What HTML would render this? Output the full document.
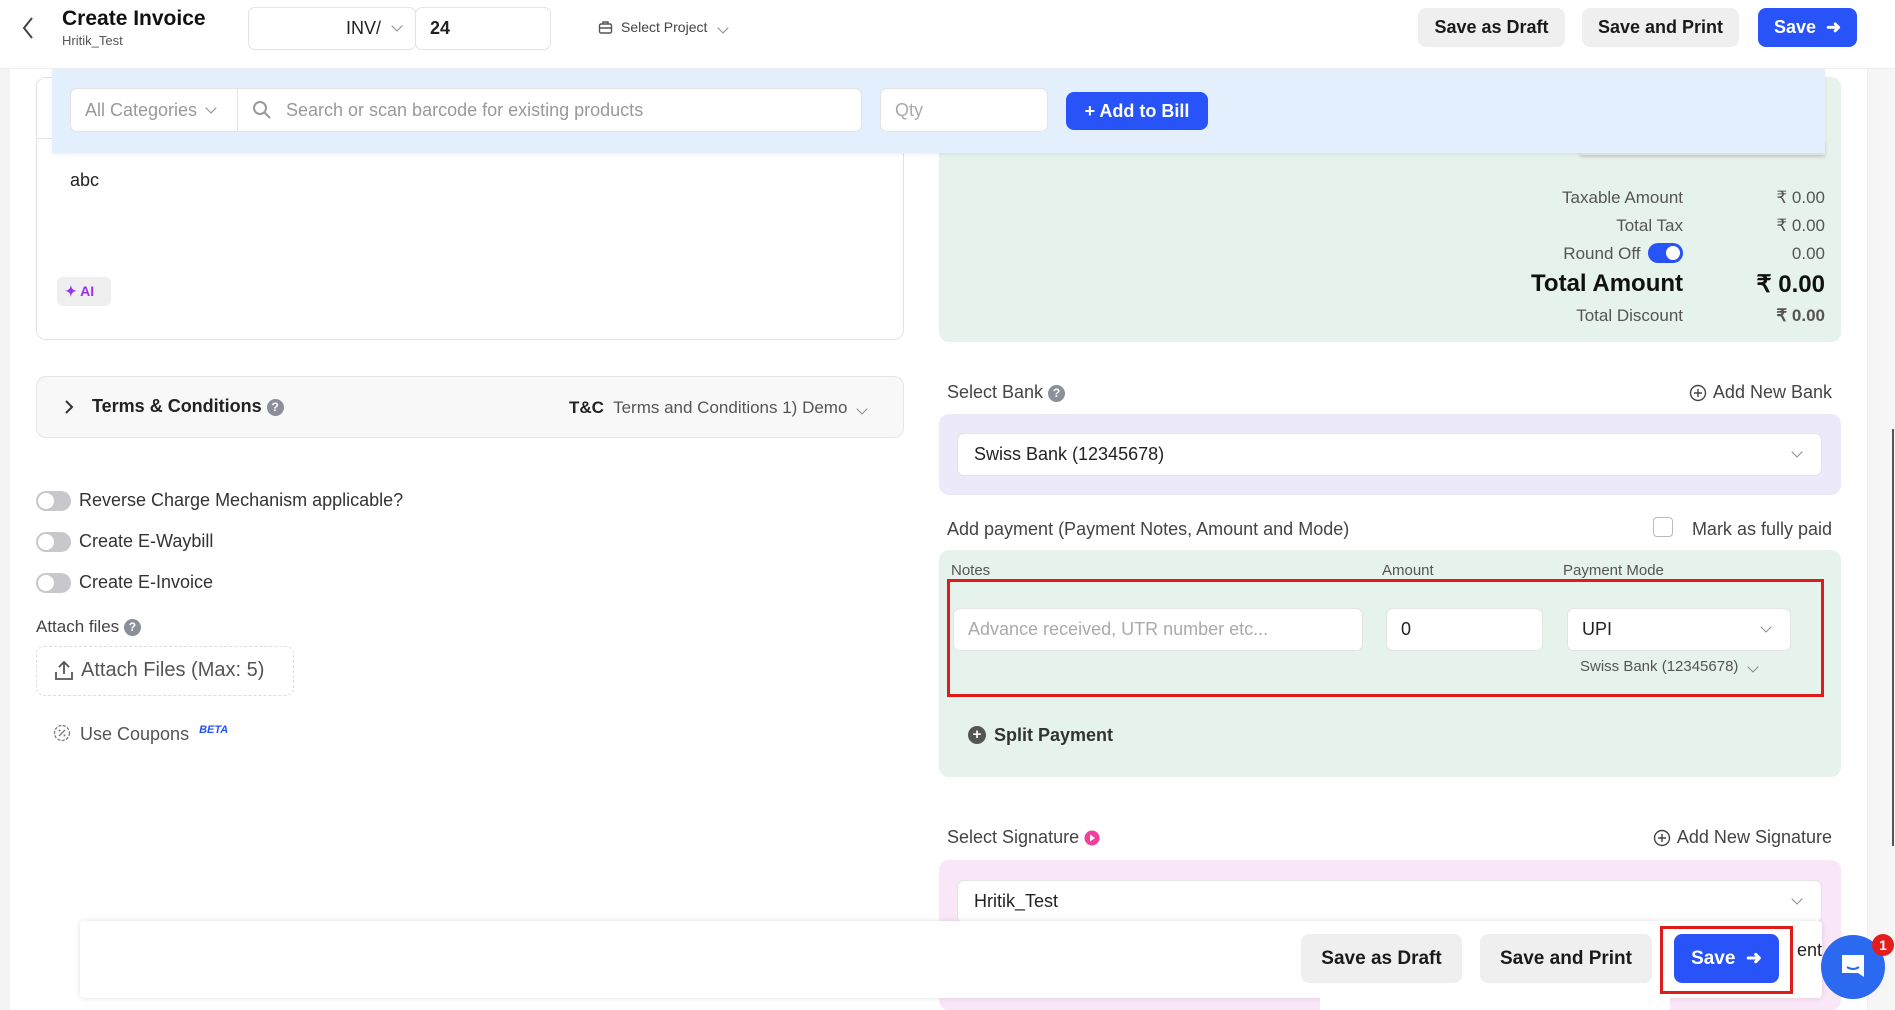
<!DOCTYPE html>
<html><head><meta charset="utf-8"><style>
*{box-sizing:border-box;margin:0;padding:0}
body{width:1895px;height:1010px;overflow:hidden;background:#fff;font-family:"Liberation Sans",sans-serif;color:#222;position:relative}
.a{position:absolute}
.btn{position:absolute;border-radius:8px;background:#efefef;font-weight:bold;font-size:18px;color:#1a1a1a;display:flex;align-items:center;justify-content:center}
.blue{background:#2753f8;color:#fff}
.inp{position:absolute;background:#fff;border:1px solid #e3e3e3;border-radius:7px;display:flex;align-items:center;font-size:18px}
.chev{display:inline-block;width:8px;height:8px;border-right:1.5px solid #888;border-bottom:1.5px solid #888;transform:rotate(45deg)}
.q{display:inline-block;width:17px;height:17px;border-radius:50%;background:#8a8f99;color:#fff;font-size:12px;text-align:center;line-height:17px;font-weight:bold;vertical-align:middle}
.tg{position:absolute;width:35px;height:20px;border-radius:10px;background:#c8c8cc;left:36px}
.tg:after{content:"";position:absolute;left:2px;top:2px;width:16px;height:16px;border-radius:50%;background:#fff}
.lbl{position:absolute;font-size:18px;color:#333}
.r{position:absolute;font-size:18px;color:#444;text-align:right;display:flex;align-items:center;gap:6px}
</style></head><body>
<div class="a" style="left:0;top:69px;width:10px;height:941px;background:#f3f3f3"></div>
<div class="a" style="right:0;top:69px;width:28px;height:941px;background:#f6f6f6;border-left:1px solid #eee"></div>
<div class="a" style="right:1px;top:429px;width:2px;height:417px;background:#555"></div>
<!-- header -->
<div class="a" style="left:0;top:0;width:1895px;height:69px;border-bottom:1px solid #eee;background:#fff"></div>
<svg class="a" style="left:20px;top:16px" width="16" height="24"><path d="M12 2 L4 12 L12 22" stroke="#444" stroke-width="2" fill="none"/></svg>
<div class="a" style="left:62px;top:7px;font-size:21px;font-weight:bold;color:#111">Create Invoice</div>
<div class="a" style="left:62px;top:33px;font-size:13px;color:#555">Hritik_Test</div>
<div class="inp" style="left:248px;top:7px;width:168px;height:43px;justify-content:flex-end;padding-right:14px;font-size:18px">INV/ <span class="chev" style="margin-left:12px;margin-top:-5px"></span></div>
<div class="inp" style="left:415px;top:7px;width:136px;height:43px;padding-left:14px;font-weight:bold">24</div>
<svg class="a" style="left:598px;top:20px" width="15" height="15"><rect x="1.5" y="4" width="12" height="9" rx="1.5" stroke="#555" stroke-width="1.4" fill="none"/><path d="M5 4V2h5v2M1.5 8h12" stroke="#555" stroke-width="1.4" fill="none"/></svg>
<div class="a" style="left:621px;top:19px;font-size:14px;color:#444">Select Project <span class="chev" style="margin-left:8px;margin-top:-4px"></span></div>
<div class="btn" style="left:1418px;top:8px;width:147px;height:39px">Save as Draft</div>
<div class="btn" style="left:1582px;top:8px;width:157px;height:39px">Save and Print</div>
<div class="btn blue" style="left:1758px;top:8px;width:99px;height:39px">Save &nbsp;&#10140;</div>
<!-- left card -->
<div class="a" style="left:36px;top:77px;width:868px;height:263px;border:1px solid #e3e3e3;border-radius:10px"></div>
<div class="a" style="left:37px;top:138px;width:866px;height:1px;background:#e6e6e6"></div>
<div class="a" style="left:70px;top:170px;font-size:18px">abc</div>
<div class="a" style="left:57px;top:277px;width:54px;height:29px;border-radius:6px;background:#efefef;color:#9b30f0;font-size:14px;font-weight:bold;line-height:29px;padding-left:8px">&#10022; AI</div>
<!-- right totals -->
<div class="a" style="left:939px;top:77px;width:902px;height:265px;background:#e6f2ec;border-radius:10px"></div>
<div class="a" style="left:1580px;top:140px;width:245px;height:15px;background:#e2ece7;box-shadow:0 2px 3px #ccc"></div>
<div class="a" style="left:1400px;top:184px;width:283px;text-align:right;font-size:17px;color:#555;line-height:28px">Taxable Amount<br>Total Tax<br>Round Off &nbsp;&nbsp;&nbsp;&nbsp;&nbsp;&nbsp;&nbsp;&nbsp;</div>
<div class="a" style="left:1648px;top:243px;width:35px;height:20px;border-radius:10px;background:#2753f8"><div style="position:absolute;right:3px;top:3px;width:14px;height:14px;border-radius:50%;background:#fff"></div></div>
<div class="a" style="left:1700px;top:184px;width:125px;text-align:right;font-size:17px;color:#555;line-height:28px">₹ 0.00<br>₹ 0.00<br>0.00</div>
<div class="a" style="left:1400px;top:270px;width:283px;text-align:right;font-size:24px;font-weight:bold;color:#111">Total Amount</div>
<div class="a" style="left:1700px;top:270px;width:125px;text-align:right;font-size:24px;font-weight:bold;color:#111">₹ 0.00</div>
<div class="a" style="left:1400px;top:306px;width:283px;text-align:right;font-size:17px;color:#555">Total Discount</div>
<div class="a" style="left:1700px;top:306px;width:125px;text-align:right;font-size:17px;color:#555;font-weight:bold">₹ 0.00</div>
<!-- blue band -->
<div class="a" style="left:52px;top:69px;width:1773px;height:84px;background:#e3effc;box-shadow:0 2px 4px rgba(0,0,0,.06)"></div>
<div class="inp" style="left:70px;top:88px;width:168px;height:44px;padding-left:14px;color:#999;border-radius:7px 0 0 7px">All Categories <span class="chev" style="margin-left:10px;margin-top:-5px"></span></div>
<div class="inp" style="left:237px;top:88px;width:625px;height:44px;padding-left:14px;color:#999;border-radius:0 7px 7px 0"><svg width="20" height="20" style="margin-right:14px"><circle cx="8" cy="8" r="6" stroke="#999" stroke-width="2" fill="none"/><path d="M12.5 12.5L18 18" stroke="#999" stroke-width="2"/></svg>Search or scan barcode for existing products</div>
<div class="inp" style="left:880px;top:88px;width:168px;height:44px;padding-left:14px;color:#aaa">Qty</div>
<div class="btn blue" style="left:1066px;top:92px;width:142px;height:38px">+ Add to Bill</div>
<!-- terms -->
<div class="a" style="left:36px;top:376px;width:868px;height:62px;background:#f8f8f8;border:1px solid #e6e6e6;border-radius:10px"></div>
<svg class="a" style="left:64px;top:399px" width="10" height="16"><path d="M2 2l6 6-6 6" stroke="#333" stroke-width="2" fill="none"/></svg>
<div class="a" style="left:92px;top:396px;font-size:18px;color:#222"><b>Terms &amp; Conditions</b> <span class="q">?</span></div>
<div class="a" style="left:569px;top:398px;font-size:17px;color:#555"><b style="color:#222">T&amp;C</b>&nbsp; Terms and Conditions 1) Demo <span class="chev" style="margin-left:6px;margin-top:-5px"></span></div>
<div class="tg" style="top:491px"></div><div class="lbl" style="left:79px;top:490px">Reverse Charge Mechanism applicable?</div>
<div class="tg" style="top:532px"></div><div class="lbl" style="left:79px;top:531px">Create E-Waybill</div>
<div class="tg" style="top:573px"></div><div class="lbl" style="left:79px;top:572px">Create E-Invoice</div>
<div class="lbl" style="left:36px;top:617px;font-size:17px;color:#444">Attach files <span class="q">?</span></div>
<div class="a" style="left:36px;top:646px;width:258px;height:50px;border:1px dashed #ddd;border-radius:8px"></div>
<svg class="a" style="left:54px;top:659px" width="20" height="22"><path d="M10 15V3M5 8l5-5 5 5M2 13v7h16v-7" stroke="#555" stroke-width="1.8" fill="none"/></svg>
<div class="a" style="left:81px;top:659px;font-size:20px;color:#555">Attach Files (Max: 5)</div>
<svg class="a" style="left:53px;top:724px" width="18" height="18"><circle cx="9" cy="9" r="7.5" stroke="#777" stroke-width="1.3" fill="none" stroke-dasharray="3 1.5"/><path d="M6 12l6-6" stroke="#777" stroke-width="1.3"/><circle cx="6.5" cy="6.5" r="1" fill="#777"/><circle cx="11.5" cy="11.5" r="1" fill="#777"/></svg>
<div class="lbl" style="left:80px;top:724px;color:#555">Use Coupons &nbsp;<i style="font-size:11px;color:#2753f8;font-weight:bold;vertical-align:top">BETA</i></div>
<!-- bank -->
<div class="lbl" style="left:947px;top:382px;color:#444">Select Bank <span class="q">?</span></div>
<div class="r" style="right:63px;top:382px"><svg width="18" height="18"><circle cx="9" cy="9" r="7.5" stroke="#444" stroke-width="1.4" fill="none"/><path d="M9 5v8M5 9h8" stroke="#444" stroke-width="1.4"/></svg>Add New Bank</div>
<div class="a" style="left:939px;top:414px;width:902px;height:81px;background:#ece9fb;border-radius:10px"></div>
<div class="inp" style="left:957px;top:433px;width:865px;height:43px;padding-left:16px">Swiss Bank (12345678)<span class="chev" style="position:absolute;right:20px;top:14px"></span></div>
<div class="lbl" style="left:947px;top:519px;color:#444">Add payment (Payment Notes, Amount and Mode)</div>
<div class="a" style="left:1653px;top:517px;width:20px;height:20px;border:1px solid #bbb;border-radius:4px"></div>
<div class="r" style="right:63px;top:519px">Mark as fully paid</div>
<div class="a" style="left:939px;top:550px;width:902px;height:227px;background:#e6f2ec;border-radius:10px"></div>
<div class="a" style="left:951px;top:562px;font-size:15px;color:#555">Notes</div>
<div class="a" style="left:1382px;top:562px;font-size:15px;color:#555">Amount</div>
<div class="a" style="left:1563px;top:562px;font-size:15px;color:#555">Payment Mode</div>
<div class="a" style="left:947px;top:579px;width:877px;height:118px;border:3px solid #e01b1b"></div>
<div class="inp" style="left:953px;top:608px;width:410px;height:43px;padding-left:14px;color:#aaa">Advance received, UTR number etc...</div>
<div class="inp" style="left:1386px;top:608px;width:157px;height:43px;padding-left:14px">0</div>
<div class="inp" style="left:1567px;top:608px;width:224px;height:43px;padding-left:14px">UPI<span class="chev" style="position:absolute;right:20px;top:14px"></span></div>
<div class="a" style="left:1580px;top:658px;font-size:15px;color:#555">Swiss Bank (12345678) <span class="chev" style="margin-left:6px;margin-top:-5px"></span></div>
<div class="a" style="left:968px;top:726px;width:18px;height:18px;border-radius:50%;background:#555;color:#fff;font-size:15px;text-align:center;line-height:18px;font-weight:bold">+</div>
<div class="lbl" style="left:994px;top:725px;font-weight:bold">Split Payment</div>
<!-- signature -->
<div class="lbl" style="left:947px;top:827px;color:#444">Select Signature <svg width="16" height="16" style="vertical-align:middle"><circle cx="8" cy="8" r="7.5" fill="#f23f9c"/><path d="M6 4.5l5 3.5-5 3.5z" fill="#fff"/></svg></div>
<div class="r" style="right:63px;top:827px"><svg width="18" height="18"><circle cx="9" cy="9" r="7.5" stroke="#444" stroke-width="1.4" fill="none"/><path d="M9 5v8M5 9h8" stroke="#444" stroke-width="1.4"/></svg>Add New Signature</div>
<div class="a" style="left:939px;top:860px;width:902px;height:150px;background:#f9e6f7;border-radius:10px"></div>
<div class="inp" style="left:957px;top:880px;width:865px;height:43px;padding-left:16px">Hritik_Test<span class="chev" style="position:absolute;right:20px;top:14px"></span></div>
<!-- bottom bar -->
<div class="a" style="left:80px;top:921px;width:1742px;height:77px;background:#fff;box-shadow:0 0 6px rgba(0,0,0,.12);border-radius:4px"></div>
<div class="a" style="left:1320px;top:998px;width:350px;height:12px;background:#fff"></div>
<div class="btn" style="left:1301px;top:934px;width:161px;height:49px;font-size:19px">Save as Draft</div>
<div class="btn" style="left:1480px;top:934px;width:172px;height:49px;font-size:19px">Save and Print</div>
<div class="a" style="left:1660px;top:926px;width:133px;height:68px;border:3px solid #e01b1b"></div>
<div class="btn blue" style="left:1674px;top:934px;width:105px;height:49px;font-size:19px">Save &nbsp;&#10140;</div>
<div class="a" style="left:1797px;top:940px;font-size:18px">ent</div>
<div class="a" style="left:1821px;top:935px;width:64px;height:64px;border-radius:50%;background:#2a69f0"></div>
<svg class="a" style="left:1838px;top:951px" width="30" height="32"><path d="M4 4h22v22l-6-4H4z" fill="#fff"/><path d="M9 16q6 4 12 0" stroke="#2a69f0" stroke-width="2" fill="none"/></svg>
<div class="a" style="left:1872px;top:934px;width:22px;height:22px;border-radius:50%;background:#e41c1c;color:#fff;font-size:14px;font-weight:bold;text-align:center;line-height:22px">1</div>
</body></html>
